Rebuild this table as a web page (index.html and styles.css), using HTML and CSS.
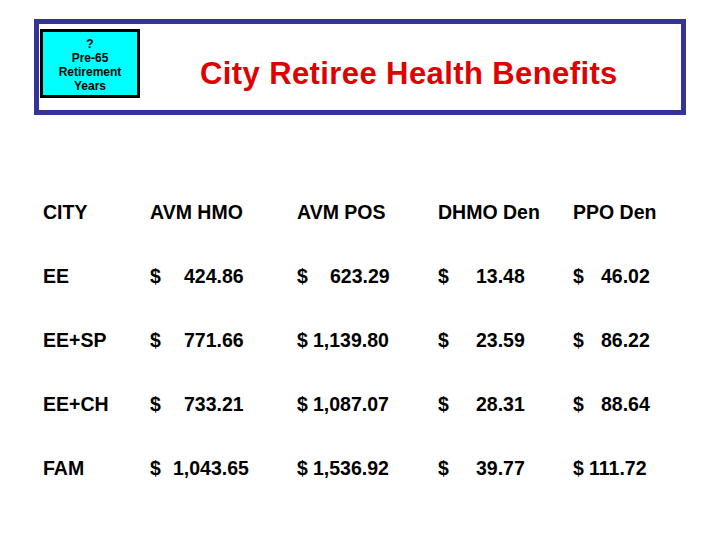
FILE: index.html
```html
<!DOCTYPE html>
<html>
<head>
<meta charset="utf-8">
<link rel="stylesheet" href="styles.css">
</head>
<body>
<div class="frame">
  <div class="badge">
    <div>?</div>
    <div>Pre-65</div>
    <div>Retirement</div>
    <div>Years</div>
  </div>
  <div class="title">City Retiree Health Benefits</div>
</div>
<div class="table">
  <div class="c">CITY</div>
  <div class="c">AVM HMO</div>
  <div class="c">AVM POS</div>
  <div class="c">DHMO Den</div>
  <div class="c">PPO Den</div>

  <div class="c">EE</div>
  <div class="c"><span class="cur w34">$</span>424.86</div>
  <div class="c"><span class="cur w33">$</span>623.29</div>
  <div class="c"><span class="cur w38">$</span>13.48</div>
  <div class="c"><span class="cur w28">$</span>46.02</div>

  <div class="c">EE+SP</div>
  <div class="c"><span class="cur w34">$</span>771.66</div>
  <div class="c"><span class="cur w16">$</span>1,139.80</div>
  <div class="c"><span class="cur w38">$</span>23.59</div>
  <div class="c"><span class="cur w28">$</span>86.22</div>

  <div class="c">EE+CH</div>
  <div class="c"><span class="cur w34">$</span>733.21</div>
  <div class="c"><span class="cur w16">$</span>1,087.07</div>
  <div class="c"><span class="cur w38">$</span>28.31</div>
  <div class="c"><span class="cur w28">$</span>88.64</div>

  <div class="c">FAM</div>
  <div class="c"><span class="cur w23">$</span>1,043.65</div>
  <div class="c"><span class="cur w16">$</span>1,536.92</div>
  <div class="c"><span class="cur w38">$</span>39.77</div>
  <div class="c"><span class="cur w16">$</span>111.72</div>
</div>
</body>
</html>
```
FILE: styles.css
```css
html, body {
  margin: 0;
  padding: 0;
  background: #ffffff;
}
body {
  font-family: "Liberation Sans", Arial, sans-serif;
  color: #000000;
}
.frame {
  margin: 19px 0 0 34px;
  width: 641px;
  height: 81px;
  border: 5px solid #333399;
  display: flex;
  align-items: flex-start;
  padding: 5px 0 0 1px;
  box-sizing: content-box;
}
.badge {
  width: 94px;
  height: 58px;
  border: 3px solid #000000;
  background: #00ffff;
  font-size: 12px;
  font-weight: bold;
  line-height: 14px;
  text-align: center;
  padding-top: 5px;
  box-sizing: content-box;
}
.title {
  margin-left: 60px;
  margin-top: 27px;
  font-size: 31px;
  font-weight: bold;
  color: #e00000;
  line-height: 35px;
  letter-spacing: 0.4px;
}
.table {
  margin: 65px 0 0 43px;
  display: grid;
  grid-template-columns: 107px 147px 141px 135px 120px;
  grid-auto-rows: 64px;
  align-items: center;
  font-size: 19.5px;
  font-weight: bold;
}
.c {
  white-space: nowrap;
}
.cur {
  display: inline-block;
}
.w16 { width: 16px; }
.w23 { width: 23px; }
.w28 { width: 28px; }
.w33 { width: 33px; }
.w34 { width: 34px; }
.w38 { width: 38px; }
```
